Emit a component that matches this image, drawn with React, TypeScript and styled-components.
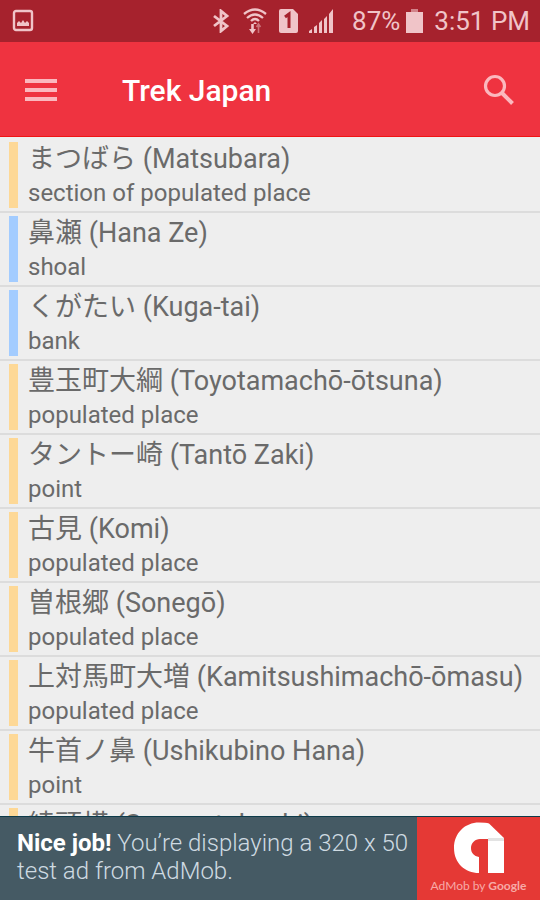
import React from "react";
import styled, { createGlobalStyle } from "styled-components";

const GlobalStyle = createGlobalStyle`
  * { box-sizing: border-box; }
  html, body, #root { height: 100%; margin: 0; }
  body { font-family: Roboto, "Noto Sans CJK JP", sans-serif; }
  h1, h2, p, ul { margin: 0; padding: 0; font-weight: 400; }
`;

const Screen = styled.div`
  display: flex;
  flex-direction: column;
  height: 100vh;
  overflow: hidden;
  background: #eeeeee;
`;

const StatusBar = styled.div`
  display: flex;
  flex: none;
  align-items: center;
  justify-content: space-between;
  height: 42px;
  padding: 0 10px 0 12px;
  background: #a6222d;
  color: #f0c4c8;
`;

const StatusGroup = styled.div`
  display: flex;
  align-items: center;
`;

const StatusIcon = styled.svg<{ $gap?: number }>`
  display: block;
  flex: none;
  margin-right: ${(p) => p.$gap ?? 0}px;
`;

const StatusText = styled.span<{ $gap?: number }>`
  font-size: 26px;
  line-height: 42px;
  margin-right: ${(p) => p.$gap ?? 0}px;
`;

const AppBar = styled.header`
  display: flex;
  flex: none;
  align-items: center;
  height: 95px;
  padding: 2px 17px 0;
  background: #ef3340;
  border-bottom: 1px solid #f01414;
`;

const IconButton = styled.button`
  display: flex;
  align-items: center;
  justify-content: center;
  width: 48px;
  height: 48px;
  padding: 0;
  border: 0;
  background: none;
  color: #fbb8be;
`;

const Title = styled.h1`
  flex: 1;
  padding: 2px 0 0 57px;
  color: #ffffff;
  font-size: 30px;
  line-height: 40px;
  font-weight: 500;
`;

const PlaceList = styled.ul`
  flex: 1;
  min-height: 0;
  padding-top: 2px;
  overflow: hidden;
  list-style: none;
`;

const PlaceRow = styled.li`
  display: flex;
  height: 74px;
  padding: 3px 9px;
  border-bottom: 2px solid #dcdcdc;
  color: #6a6a6a;
  white-space: nowrap;
`;

const Marker = styled.span<{ $kind: Kind }>`
  flex: none;
  width: 9px;
  margin-right: 10px;
  background: ${(p) => (p.$kind === "water" ? "#a3ccff" : "#fdd896")};
`;

const PlaceName = styled.h2`
  font-size: 27px;
  line-height: 34px;
`;

const PlaceType = styled.p`
  font-size: 24px;
  line-height: 34px;
`;

const AdBanner = styled.a`
  display: flex;
  flex: none;
  height: 84px;
  background: #455a64;
  border-top: 1px solid #0d3b4a;
  color: #cfdbe2;
  text-decoration: none;
`;

const AdText = styled.p`
  flex: 1;
  padding: 12px 0 0 17px;
  font-size: 24px;
  line-height: 28px;
  font-weight: 300;

  strong {
    color: #ffffff;
    font-weight: 700;
  }
`;

const AdBrand = styled.div`
  display: flex;
  flex: none;
  flex-direction: column;
  align-items: center;
  width: 123px;
  padding-top: 4px;
  background: #e53935;
  color: #f7aaa7;
  font-family: Lato, sans-serif;
  font-size: 12px;
  line-height: 22px;

  svg { display: block; }
  b { font-weight: 700; }
`;

type Kind = "land" | "water";

const places: { name: string; type: string; kind: Kind }[] = [
  { name: "まつばら (Matsubara)", type: "section of populated place", kind: "land" },
  { name: "鼻瀬 (Hana Ze)", type: "shoal", kind: "water" },
  { name: "くがたい (Kuga-tai)", type: "bank", kind: "water" },
  { name: "豊玉町大綱 (Toyotamachō-ōtsuna)", type: "populated place", kind: "land" },
  { name: "タントー崎 (Tantō Zaki)", type: "point", kind: "land" },
  { name: "古見 (Komi)", type: "populated place", kind: "land" },
  { name: "曽根郷 (Sonegō)", type: "populated place", kind: "land" },
  { name: "上対馬町大増 (Kamitsushimachō-ōmasu)", type: "populated place", kind: "land" },
  { name: "牛首ノ鼻 (Ushikubino Hana)", type: "point", kind: "land" },
  { name: "綾頭横 (Sonozutohashi)", type: "point", kind: "land" },
];

export default function App() {
  return (
    <Screen>
      <GlobalStyle />
      <StatusBar>
        <StatusIcon width="22" height="24" viewBox="0 0 22 24" fill="none">
          <rect x="2" y="2" width="18" height="19" rx="2" stroke="currentColor" strokeWidth="2.4" />
          <path d="M5 17v-3l2-2 2 2 2-3 2 3 2-2 2 2v3z" fill="currentColor" />
        </StatusIcon>
        <StatusGroup>
          <StatusIcon $gap={13} width="18" height="24" viewBox="0 0 18 24" fill="none" stroke="currentColor" strokeWidth="2.8">
            <path d="M2 7l13 10-6 5V2l6 5L2 17" />
          </StatusIcon>
          <StatusIcon $gap={12} width="24" height="26" viewBox="0 0 24 26" fill="none" stroke="currentColor" strokeWidth="2.3">
            <path d="M1 6Q12-3 23 6M4 10Q12 3 20 10M8 13Q12 9 16 13" />
            <path d="M9.500 16v6" strokeWidth="2.6" />
            <path d="M6 21h7l-3.500 5zM12 14l-2 2h4z" fill="currentColor" stroke="none" />
            <path d="M15.500 25v-8M13.500 19l2-3 2 3" strokeWidth="1.600" opacity=".5" />
          </StatusIcon>
          <StatusIcon $gap={11} width="19" height="24" viewBox="0 0 19 24">
            <path d="M2 0h12l5 5v17q0 2-2 2H2q-2 0-2-2V2q0-2 2-2z" fill="currentColor" />
            <path d="M6 8l4-3v14" fill="none" stroke="#a6222d" strokeWidth="3" />
          </StatusIcon>
          <StatusIcon $gap={18} width="25" height="24" viewBox="0 0 25 24" fill="currentColor">
            <path d="M0 24v-2l3-2v4zM5 24v-6l3-2v8zM10 24V14l3-3v13zM15 24V10l3-3v17zM20 24V5l4-5v24z" />
          </StatusIcon>
          <StatusText $gap={6}>87%</StatusText>
          <StatusIcon $gap={11} width="17" height="24" viewBox="0 0 17 24" fill="currentColor">
            <path d="M5 0h7v3H5z" opacity=".6" />
            <path d="M0 3h17v21H0z" />
          </StatusIcon>
          <StatusText>3:51 PM</StatusText>
        </StatusGroup>
      </StatusBar>
      <AppBar>
        <IconButton aria-label="Menu">
          <svg width="32" height="24" viewBox="0 0 32 24" fill="currentColor">
            <path d="M0 1h32v4H0zM0 10h32v4H0zM0 19h32v4H0z" />
          </svg>
        </IconButton>
        <Title>Trek Japan</Title>
        <IconButton aria-label="Search">
          <svg width="32" height="32" viewBox="0 0 32 32" fill="none" stroke="currentColor">
            <circle cx="12" cy="12" r="9.500" strokeWidth="3.200" />
            <path d="M19 19l10.500 10.500" strokeWidth="4" />
          </svg>
        </IconButton>
      </AppBar>
      <PlaceList>
        {places.map((place) => (
          <PlaceRow key={place.name}>
            <Marker $kind={place.kind} />
            <div>
              <PlaceName lang="ja">{place.name}</PlaceName>
              <PlaceType>{place.type}</PlaceType>
            </div>
          </PlaceRow>
        ))}
      </PlaceList>
      <AdBanner href="#">
        <AdText>
          <strong>Nice job!</strong> You’re displaying a 320 x 50 test ad from AdMob.
        </AdText>
        <AdBrand>
          <svg width="52" height="54" viewBox="0 0 52 54">
            <path
              d="M26 52C12 52 1 42 1 27 1 12 12 1.500 26 1.500q7 0 10 1L51 17v35H35V18h-8c-5 0-9 4-9 9s3 8 8 9z"
              fill="#ffffff"
            />
            <path d="M35 17h16v3H35z" fill="#e3e3e3" />
          </svg>
          <span>AdMob by <b>Google</b></span>
        </AdBrand>
      </AdBanner>
    </Screen>
  );
}
